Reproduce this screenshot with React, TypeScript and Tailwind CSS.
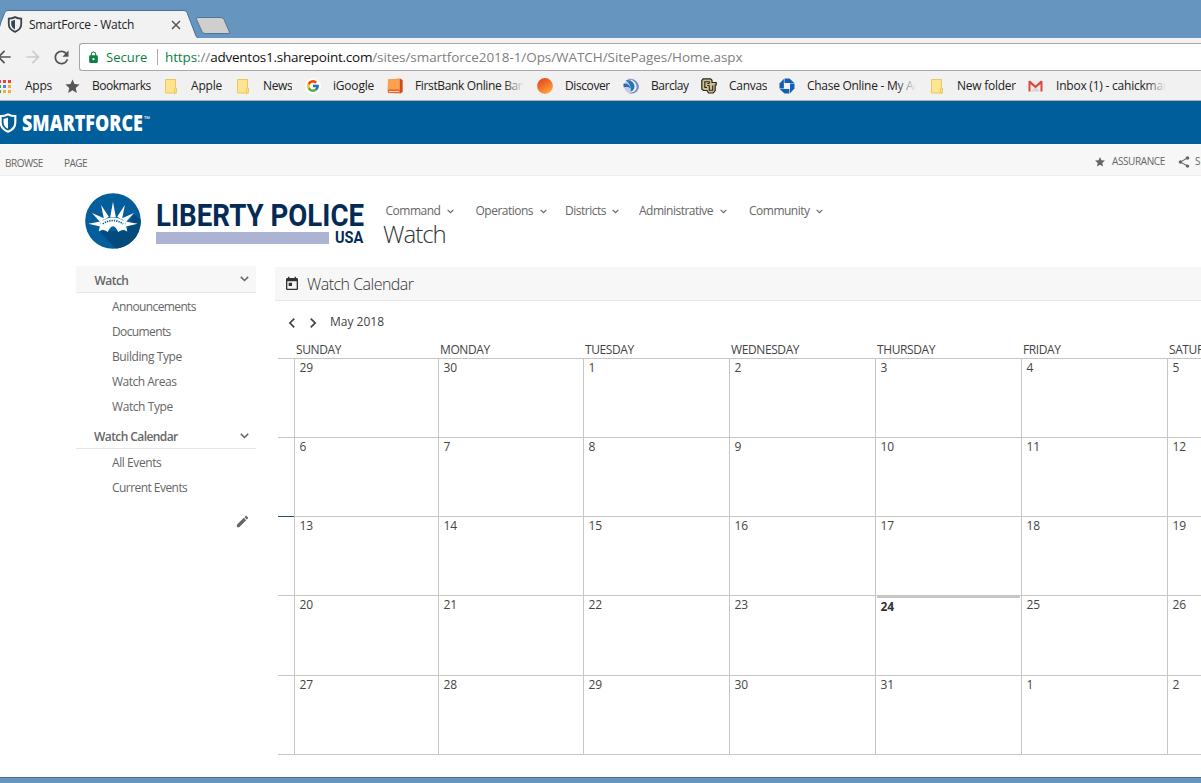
import React from 'react';
import type { ReactNode } from 'react';
import { MdStar, MdShare, MdEdit, MdLock, MdRefresh, MdArrowBack, MdArrowForward, MdToday, MdChevronLeft, MdChevronRight } from 'react-icons/md';
import { FcGoogle } from 'react-icons/fc';

function Shield({ className, color }: { className: string; color: string }) {
  return (
    <svg viewBox="0 0 16 18" className={className} fill="none">
      <path d="M8 1.2C5.8 2.4 3.5 2.8 1.4 2.8V8.5C1.4 12.500 4.200 15.300 8 16.800C11.800 15.300 14.600 12.500 14.600 8.500V2.800C12.500 2.800 10.200 2.400 8 1.200Z" stroke={color} strokeWidth="1.9" />
      <path d="M8 4C6.700 4.700 5.400 5 4 5.200V8.500C4 11 5.600 13 8 14.200Z" fill={color} />
    </svg>
  );
}

function Chevron({ className }: { className: string }) {
  return (
    <svg viewBox="0 0 9 6" className={className} fill="none" stroke="#666" strokeWidth="1.5">
      <path d="M0.800 0.900L4.500 4.500L8.200 0.900" />
    </svg>
  );
}

function Folder() {
  return (
    <svg viewBox="0 0 13 15" className="ml-0.5 h-[15px] w-[13px]">
      <path d="M.5.5h10v9h1v4.500H.5Z" fill="#ffe591" stroke="#ebc75c" />
      <path d="M9.500 13.500V10.500q0-1 1-1t1 1v2q0 1.500-2 1.500" fill="#ffe591" stroke="#ebc75c" />
    </svg>
  );
}

function FirstBank() {
  return (
    <svg viewBox="0 0 16 16" className="h-4 w-4">
      <path d="M1 1.500L13 .500L15.500 2V14L13 15.500L1 15Z" fill="#f58235" />
      <path d="M1 1.500L12.500 1V11L.500 11.500Z" fill="#fba04d" />
      <path d="M13 .800L15.500 2.200V14L13 15.500Z" fill="#c8501f" />
      <path d="M.500 11.500H12.500V15L1 14.800Z" fill="#e96a2c" />
      <path d="M2 13.500H12" stroke="#ffe0c4" strokeWidth=".9" />
    </svg>
  );
}

function Discover() {
  return (
    <svg viewBox="0 0 16 16" className="h-4 w-4">
      <defs>
        <linearGradient id="dg" x1="0" y1="0" x2=".6" y2="1">
          <stop offset="0" stopColor="#d8431b" />
          <stop offset=".5" stopColor="#f26c28" />
          <stop offset="1" stopColor="#fca33b" />
        </linearGradient>
      </defs>
      <circle cx="8" cy="8" r="7.900" fill="url(#dg)" />
    </svg>
  );
}

function Barclay() {
  return (
    <svg viewBox="0 0 16 16" className="h-4 w-4">
      <circle cx="8.500" cy="8.300" r="7.400" fill="#c3cde8" />
      <path d="M4 1C10 -.500 15 3.500 15.800 8C16 13 12 16.500 6 15.300C11 14.500 12.500 11 11.500 7.500C10.500 4.500 8 2 4 1Z" fill="#7f8dbf" />
      <path d="M7 1.500C11.500 2.500 14 6.500 13.500 10C13 13 10 14.500 7.500 14.300C11 12 11.500 6 7 1.500Z" fill="#f4f7fc" />
      <path d="M2.500 2C8 1.500 12 5 11.500 9C11 11.500 10 13 7.500 13.500C9 10 6.500 5 2.500 2Z" fill="#2277b4" />
      <path d="M.300 6C3 4.800 6.500 6.500 8 10.500C5.500 8.800 3 8.800 .800 9.500Z" fill="#2f6ba8" />
    </svg>
  );
}

function Buffalo() {
  return (
    <svg viewBox="0 0 16 16" className="h-4 w-4" fill="none">
      <path d="M2.200 .800H9.500L11 2.300V4.500H15.200V7H14.200V12.500L12.200 15H7.500L6 12.500H2.500L.800 11V2.500Z" fill="#cdbf92" stroke="#27241c" strokeWidth="1.200" />
      <path d="M8.300 5.500V3.700H3.800V9.500H6M8.300 7.500V12.200H11.700V7.500M6.200 7.500H8.300M8.300 5.500H6.300" stroke="#27241c" strokeWidth="1.100" />
    </svg>
  );
}

function Chase() {
  return (
    <svg viewBox="0 0 16 16" className="h-4 w-4" fill="#1160b7">
      <path d="M5.500.500H10.500L15.300 5H5.500Z" />
      <path d="M15.500 5.600V10.500L11 15.300V5.600Z" />
      <path d="M10.400 15.500H5.500L.700 11H10.400Z" />
      <path d="M.500 10.400V5.500L4.900.800V10.400Z" />
    </svg>
  );
}

function Gmail() {
  return (
    <svg viewBox="0 0 15 12" className="h-3 w-[15px]">
      <path d="M1 .500H14V11.500H1Z" fill="#eceaea" />
      <path d="M3 11.500L7.500 7L12 11.500" fill="#d8d4d4" />
      <path d="M.500 11.500V1L2.300.800L7.500 5.500L12.700.800L14.500 1V11.500H12.500V4L7.500 8.300L2.500 4V11.500Z" fill="#d54b3d" />
    </svg>
  );
}

function Bookmark({ icon, label, width, fade, text = '' }: { icon: ReactNode; label: string; width: string; fade?: boolean; text?: string }) {
  return (
    <div className={`flex shrink-0 items-center ${width}`}>
      <span className="flex w-[28px] shrink-0 items-center">{icon}</span>
      <span className={`relative overflow-hidden whitespace-nowrap ${text}`}>
        {label}
        {fade && <span className="absolute inset-y-0 right-0 w-5 bg-gradient-to-r from-transparent to-[#f1f1f1]" />}
      </span>
    </div>
  );
}

function LibertyCrest() {
  return (
    <svg viewBox="5 5 167 167" className="h-14 w-14 shrink-0">
      <defs>
        <clipPath id="disc"><circle cx="88.500" cy="88.500" r="83" /></clipPath>
      </defs>
      <circle cx="88.500" cy="88.500" r="83" fill="#045e9c" />
      <path clipPath="url(#disc)" d="M48 119L105 180H180V92L148 67L130 119Z" fill="#044a7d" />
      <path fill="#fff" d="M15 97L51 90L50 105ZM26 65L63 81L52 94ZM53 41L76 76L62 85ZM88.500 31L97 77H80ZM124 41L101 76L115 85ZM151 65L114 81L125 94ZM162 97L126 90L127 105Z" />
      <path fill="#fff" d="M46 120L52 91Q88 65 125 91L131 120Q121 113 116 115Q110 116 104 121Q98 106 88.500 104Q79 106 73 121Q67 116 61 115Q56 113 46 120Z" />
      <path d="M58 97Q88 77 119 97" fill="none" stroke="#045e9c" strokeWidth="5" strokeDasharray="4 3" />
    </svg>
  );
}

const nav = [
  { label: 'Command', width: 'w-[90px]' },
  { label: 'Operations', width: 'w-[89.500px]' },
  { label: 'Districts', width: 'w-[74px]' },
  { label: 'Administrative', width: 'w-[110px]' },
  { label: 'Community', width: 'w-[90px]' },
];

const days = ['SUNDAY', 'MONDAY', 'TUESDAY', 'WEDNESDAY', 'THURSDAY', 'FRIDAY', 'SATURDAY'];

const weeks = [
  { days: [29, 30, 1, 2, 3, 4, 5], height: 'h-[79px]' },
  { days: [6, 7, 8, 9, 10, 11, 12], height: 'h-[79px]' },
  { days: [13, 14, 15, 16, 17, 18, 19], height: 'h-[79px]', marked: true },
  { days: [20, 21, 22, 23, 24, 25, 26], height: 'h-[80px]', today: 24 },
  { days: [27, 28, 29, 30, 31, 1, 2], height: 'h-[79px]' },
];

const columns = 'grid grid-cols-[16px_144px_145px_146px_146px_146px_146px_146px]';

function SideLink({ children, text = 'tracking-[-0.55px]' }: { children: ReactNode; text?: string }) {
  return <a className={`flex h-[25px] items-center pl-9 ${text}`}>{children}</a>;
}

export default function App() {
  return (
    <div className="flex h-[783px] w-[1201px] flex-col overflow-hidden bg-white font-['Open_Sans',sans-serif] text-[12px] text-[#666]">
      <div className="h-[38px] shrink-0 bg-[#6696bf]">
        <svg viewBox="0 0 1201 38" className="block h-[38px] w-full">
          <path d="M-4 39L1 22L5 12Q6 10.500 8 10.500H184Q186 10.500 187 12.500L196 36Q197 38.500 200 38.500H1202V42H-4Z" fill="#f2f2f2" stroke="#48708f" />
          <path d="M198 17.500H221Q223 17.500 224 19.500L229.500 32Q230 33.500 228 33.500H205Q203 33.500 202 31.500L196.500 19.500Q196 17.500 198 17.500Z" fill="#cfcfcf" stroke="#527695" />
          <path d="M172 21L180 29M180 21L172 29" stroke="#555" strokeWidth="1.500" />
        </svg>
        <div className="relative -mt-[26px] flex h-[26px] items-start">
          <Shield className="ml-[7px] mt-[4px] h-[17px] w-4" color="#38434d" />
          <span className="ml-[6px] mt-[4px] leading-[17px] tracking-[-0.25px] text-[#222]">SmartForce - Watch</span>
        </div>
      </div>

      <div className="flex h-[34px] shrink-0 items-center bg-[#f2f2f2] pt-1">
        <MdArrowBack className="-ml-[6px] size-5 text-[#555]" />
        <MdArrowForward className="ml-[9px] size-5 text-[#ccc]" />
        <MdRefresh className="ml-[8px] size-[21px] text-[#555]" />
        <div className="ml-[7px] flex h-7 grow items-center rounded-l-[3px] border border-r-0 border-[#a6a6a6] bg-white text-[13.500px]">
          <MdLock className="ml-[7px] size-[13px] text-[#0b8043]" />
          <span className="ml-[6px] mt-px w-[51px] text-[13px] text-[#0b8043]">Secure</span>
          <span className="h-4 w-px bg-[#aaa]" />
          <span className="ml-[7px] mt-px whitespace-nowrap text-[13.500px] tracking-[-0.115px] text-[#808080]">
            <span className="text-[#0b8043]">https</span>://<span className="tracking-[-0.24px] text-[#111]">adventos1.sharepoint.com</span><span className="tracking-[-0.06px]">/sites/smartforce2018-1/Ops/WATCH/SitePages/Home.aspx</span>
          </span>
        </div>
      </div>

      <div className="flex h-[29px] shrink-0 items-center overflow-hidden border-b border-[#adadad] bg-[#f1f1f1] text-[12px] text-[#222]">
        <svg viewBox="0 0 11 13" className="h-[13px] w-[11px] shrink-0">
          <path d="M-2 0h3v3h-3zM3 0h3v3H3zM8 0h3v3H8z" fill="#ea4335" />
          <path d="M-2 5h3v3h-3z" fill="#34a853" />
          <path d="M3 5h3v3H3z" fill="#4285f4" />
          <path d="M8 5h3v3H8zM3 10h3v3H3zM8 10h3v3H8z" fill="#fbab2c" />
          <path d="M-2 10h3v3h-3z" fill="#34a853" />
        </svg>
        <span className="ml-[14px] w-[39px] shrink-0 tracking-[-0.25px]">Apps</span>
        <Bookmark icon={<MdStar className="size-[17px] text-[#555]" />} label="Bookmarks" width="w-[99px]" text="tracking-[-0.5px]" />
        <Bookmark icon={<Folder />} label="Apple" width="w-[72px]" text="tracking-[-0.2px]" />
        <Bookmark icon={<Folder />} label="News" width="w-[70px]" text="tracking-[-0.35px]" />
        <Bookmark icon={<span className="rounded-full bg-white p-px"><FcGoogle className="size-[14px]" /></span>} label="iGoogle" width="w-[82px]" text="tracking-[-0.2px]" />
        <Bookmark icon={<FirstBank />} label="FirstBank Online Banking" width="w-[150px]" fade text="w-[109px] tracking-[-0.36px]" />
        <Bookmark icon={<Discover />} label="Discover" width="w-[86px]" text="tracking-[-0.4px]" />
        <Bookmark icon={<Barclay />} label="Barclay" width="w-[78px]" text="tracking-[-0.45px]" />
        <Bookmark icon={<Buffalo />} label="Canvas" width="w-[78px]" text="tracking-[-0.3px]" />
        <Bookmark icon={<Chase />} label="Chase Online - My Account" width="w-[150px]" fade text="w-[109px] tracking-[-0.28px]" />
        <Bookmark icon={<Folder />} label="New folder" width="w-[99px]" text="tracking-[-0.25px]" />
        <Bookmark icon={<Gmail />} label="Inbox (1) - cahickman" width="w-[140px]" fade text="w-[110px] tracking-[-0.22px]" />
      </div>

      <div className="flex h-[43px] shrink-0 items-center bg-[#005e9b] text-white">
        <Shield className="-ml-px h-[20px] w-[18px]" color="#fff" />
        <span className="ml-[5px] mt-[2px] w-[122px] origin-left scale-x-[0.796] whitespace-nowrap text-[22.500px] font-extrabold leading-none">SMARTFORCE</span>
        <span className="-mt-2 text-[8px]">™</span>
      </div>

      <div className="flex h-8 shrink-0 items-center border-b border-[#ededed] bg-[#f7f7f7] text-[10px]">
        <span className="ml-[5px] mt-2 w-[59px] tracking-[-0.5px]">BROWSE</span>
        <span className="mt-2 tracking-[-0.5px]">PAGE</span>
        <MdStar className="ml-auto mt-1 size-[12px]" />
        <span className="ml-[6px] mt-1 w-[65px] tracking-[-0.4px]">ASSURANCE</span>
        <MdShare className="mt-1 size-[14px]" />
        <span className="ml-[4px] mt-1 w-[6px] overflow-hidden">SHARE</span>
      </div>

      <div className="flex h-[90px] shrink-0 pl-[85px] pt-[17px]">
        <LibertyCrest />
        <div className="ml-[15px] w-[228px] pt-[9px] font-[Roboto,sans-serif] font-bold text-[#032b56]">
          <div className="h-[30px] origin-left scale-x-[0.875] whitespace-nowrap text-[31.600px] leading-[28px]">LIBERTY POLICE</div>
          <div className="flex h-[12px] items-center">
            <span className="h-[12px] w-[173px] bg-[#adb3d3]" />
            <span className="ml-[6px] mt-px origin-left scale-x-[0.88] text-[16.500px] leading-none">USA</span>
          </div>
        </div>
        <div>
          <div className="ml-[1.500px] flex pt-[9px] leading-[18px]">
            {nav.map((n) => (
              <span key={n.label} className={`flex items-center tracking-[-0.5px] ${n.width}`}>
                {n.label}
                <Chevron className="ml-[6.500px] h-[5px] w-[7px]" />
              </span>
            ))}
          </div>
          <h1 className="-ml-px -mt-0.5 text-[24px] font-light leading-[31px] tracking-[-1px] text-[#333]">Watch</h1>
        </div>
      </div>

      <div className="flex h-[511px] shrink-0">
        <aside className="ml-[76px] w-[180px] shrink-0">
          <div className="flex h-[27px] items-center justify-between border-b border-[#e6e6e6] bg-[#f7f7f7] pl-[18.500px] pr-[7.500px] font-semibold tracking-[-0.55px]">
            <span className="mt-[3px]">Watch</span>
            <Chevron className="h-[6px] w-[9px]" />
          </div>
          <div className="pt-px">
            <SideLink text="tracking-[-0.62px]">Announcements</SideLink>
            <SideLink text="tracking-[-0.62px]">Documents</SideLink>
            <SideLink text="tracking-[-0.42px]">Building Type</SideLink>
            <SideLink text="tracking-[-0.5px]">Watch Areas</SideLink>
            <SideLink text="tracking-[-0.42px]">Watch Type</SideLink>
          </div>
          <div className="mt-[3px] flex h-[27px] items-center justify-between border-b border-[#e6e6e6] pl-[18px] pr-[7.500px] font-semibold tracking-[-0.58px]">
            <span className="mt-[3px]">Watch Calendar</span>
            <Chevron className="mt-px h-[6px] w-[9px]" />
          </div>
          <div className="pt-px">
            <SideLink text="tracking-[-0.42px]">All Events</SideLink>
            <SideLink>Current Events</SideLink>
          </div>
          <MdEdit className="ml-[159px] mt-[14px] size-[15px]" />
        </aside>

        <main className="ml-[19px] w-[926px] shrink-0 overflow-hidden pt-px">
          <h2 className="flex h-[34px] items-center border-b border-[#e8e8e8] bg-[#f7f7f7] pl-[9px] text-[16px] font-light tracking-[-0.52px] text-[#333]">
            <MdToday className="mr-[7px] size-4 text-[#333]" />
            Watch Calendar
          </h2>
          <div className="flex h-[40px] items-center pl-[7px] text-[12px] text-[#444]">
            <MdChevronLeft className="mt-[3px] size-5" />
            <MdChevronRight className="ml-px mt-[3px] size-5" />
            <span className="ml-[7px] mt-px">May 2018</span>
          </div>
          <div className="ml-[3px] text-[#444]">
            <div className={`${columns} h-[17px] items-center text-[12px] tracking-[-0.4px]`}>
              <span />
              {days.map((d) => <span key={d} className="pl-[2px]">{d}</span>)}
            </div>
            {weeks.map((w, i) => (
              <div key={i} className={`${columns} ${w.height}`}>
                <div className={`border-t ${w.marked ? 'border-[#1f4e6b]' : 'border-[#c6c6c6]'}`} />
                {w.days.map((d, j) => (
                  <div key={j} className="border-l border-t border-[#c6c6c6] leading-[17px]">
                    {d === w.today ? (
                      <div className="mx-px border-t-2 border-[#c6c6c6] pl-[3.500px] font-bold text-[#333]">{d}</div>
                    ) : (
                      <div className="pl-[4.500px]">{d}</div>
                    )}
                  </div>
                ))}
              </div>
            ))}
            <div className="border-t border-[#c6c6c6]" />
          </div>
        </main>
      </div>

      <div className="h-[6px] shrink-0 border-t border-[#48708f] bg-[#6696bf]" />
    </div>
  );
}
